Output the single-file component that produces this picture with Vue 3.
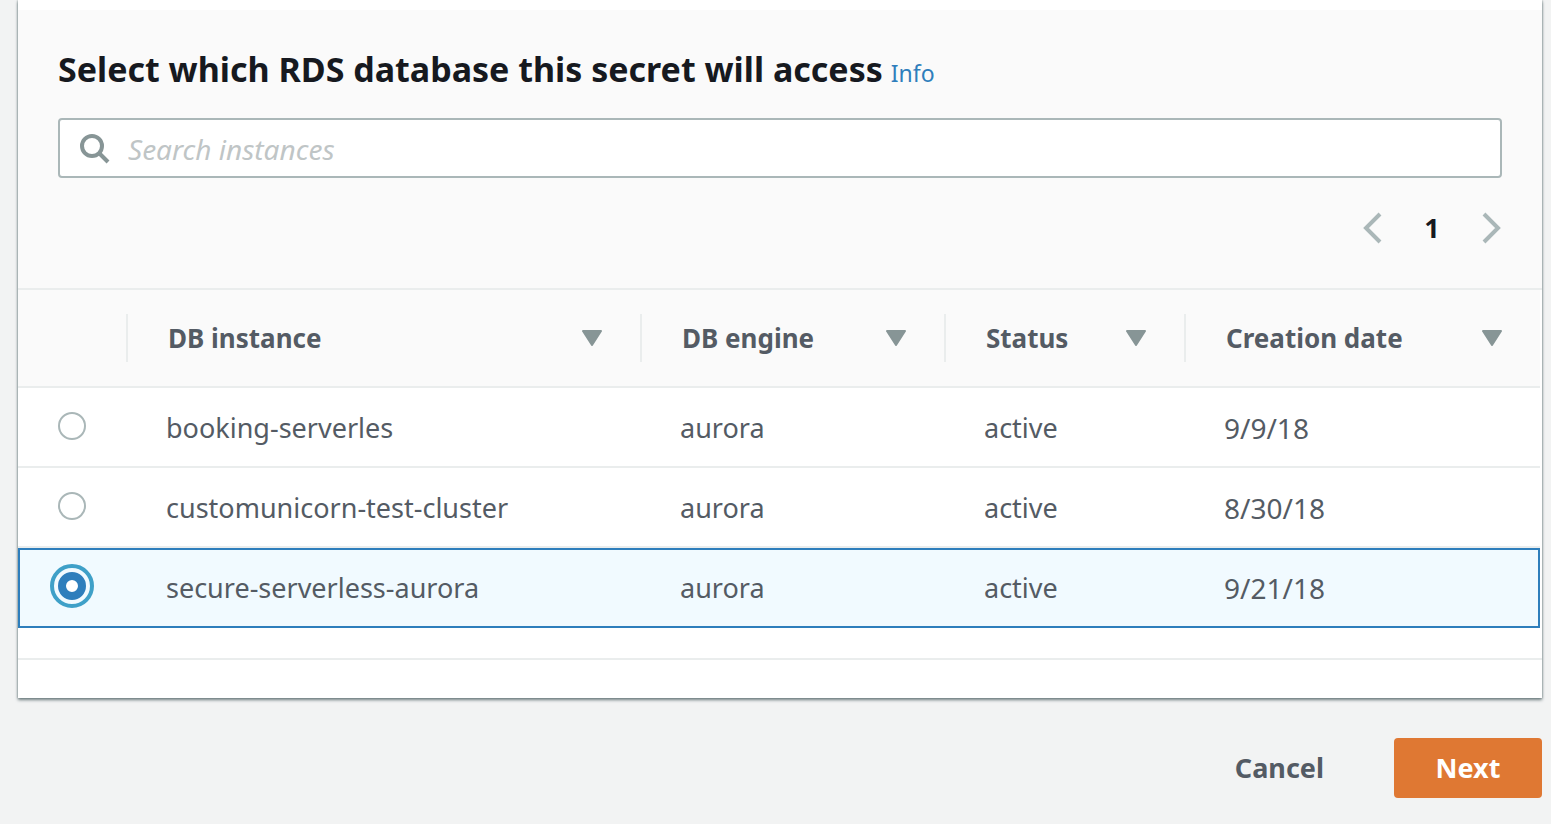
<script setup>
import { ref } from 'vue'

const query = ref('')
const selected = ref('secure-serverless-aurora')

const columns = [
  { key: 'instance', label: 'DB instance' },
  { key: 'engine', label: 'DB engine' },
  { key: 'status', label: 'Status' },
  { key: 'created', label: 'Creation date' },
]

const instances = [
  { id: 'booking-serverles', engine: 'aurora', status: 'active', created: '9/9/18' },
  { id: 'customunicorn-test-cluster', engine: 'aurora', status: 'active', created: '8/30/18' },
  { id: 'secure-serverless-aurora', engine: 'aurora', status: 'active', created: '9/21/18' },
]
</script>

<template>
  <main class="page">
    <section class="panel">
      <header class="panel-header">
        <div class="title-row">
          <h2 class="title">Select which RDS database this secret will access</h2>
          <a class="info" href="#info">Info</a>
        </div>
        <div class="search">
          <svg class="search-icon" viewBox="0 0 32 32" aria-hidden="true">
            <circle cx="14" cy="14" r="10" />
            <path d="M21 21l9 9" />
          </svg>
          <input v-model="query" class="search-input" type="text" placeholder="Search instances" aria-label="Search instances" />
        </div>
        <nav class="pagination" aria-label="Pages">
          <button class="page-arrow" type="button" aria-label="Previous page">
            <svg viewBox="0 0 20 32" aria-hidden="true"><path d="M18 2L4 16l14 14" /></svg>
          </button>
          <button class="page-number" type="button" aria-current="page">1</button>
          <button class="page-arrow" type="button" aria-label="Next page">
            <svg viewBox="0 0 20 32" aria-hidden="true"><path d="M2 2l14 14L2 30" /></svg>
          </button>
        </nav>
      </header>

      <div class="table-wrap">
        <table class="table">
          <colgroup>
            <col class="col-select" />
            <col v-for="c in columns" :key="c.key" :class="'col-' + c.key" />
          </colgroup>
          <thead>
            <tr>
              <td></td>
              <th v-for="c in columns" :key="c.key" scope="col">
                <div class="head-cell">
                  <span>{{ c.label }}</span>
                  <svg class="sort" viewBox="0 0 20 16" aria-hidden="true">
                    <path d="M1 1h18l-9 14z" />
                  </svg>
                </div>
              </th>
            </tr>
          </thead>
          <tbody>
            <tr v-for="row in instances" :key="row.id" :class="{ selected: row.id === selected }">
              <td class="select-cell">
                <input :id="row.id" v-model="selected" class="radio" type="radio" name="instance" :value="row.id" />
              </td>
              <td><label :for="row.id">{{ row.id }}</label></td>
              <td>{{ row.engine }}</td>
              <td>{{ row.status }}</td>
              <td class="date">{{ row.created }}</td>
            </tr>
          </tbody>
        </table>
      </div>
      <footer class="panel-footer"></footer>
    </section>

    <div class="actions">
      <button class="btn" type="button">Cancel</button>
      <button class="btn primary" type="button">Next</button>
    </div>
  </main>
</template>

<style>
body {
  margin: 0;
  background: #f2f3f3;
}
</style>

<style scoped>
.page {
  box-sizing: border-box;
  min-height: 100vh;
  padding: 0 9px 26px 18px;
  background: #f2f3f3;
  color: #545b64;
  font-family: "Noto Sans", "Open Sans", sans-serif;
  font-size: 27px;
  line-height: 40px;
}

.panel {
  padding-top: 10px;
  background: #fff;
  box-shadow: 0 2px 3px 0 #6f7e80, 0 0 2px 0 #879596;
}

.panel-header {
  padding: 36px 40px 40px;
  background: #fafafa;
  border-bottom: 2px solid #eaeded;
}

.title-row {
  display: flex;
  align-items: baseline;
  gap: 8px;
}

.title {
  margin: 0;
  color: #16191f;
  font-size: 34px;
  font-weight: 700;
  line-height: 46px;
}

.info {
  color: #2e7ebc;
  font-size: 23px;
  text-decoration: none;
}

.search {
  display: flex;
  align-items: center;
  gap: 18px;
  box-sizing: border-box;
  height: 60px;
  margin-top: 25px;
  padding: 0 18px;
  background: #fff;
  border: 2px solid #aab7b8;
  border-radius: 4px;
}

.search-icon {
  flex: none;
  width: 32px;
  height: 32px;
  fill: none;
  stroke: #879596;
  stroke-width: 4;
}

.search-input {
  flex: 1;
  min-width: 0;
  padding: 2px 0 0;
  border: 0;
  outline: 0;
  background: transparent;
  color: #16191f;
  font: inherit;
  font-size: 28px;
}

.search-input::placeholder {
  color: #bfc5c6;
  font-style: italic;
  opacity: 1;
}

.pagination {
  display: flex;
  justify-content: flex-end;
  align-items: center;
  margin-top: 30px;
}

.page-arrow {
  display: flex;
  padding: 0;
  border: 0;
  background: none;
}

.page-arrow svg {
  width: 20px;
  height: 32px;
  fill: none;
  stroke: #aab7b8;
  stroke-width: 4;
}

.page-number {
  width: 100px;
  padding: 0;
  border: 0;
  background: none;
  color: #16191f;
  font: inherit;
  font-weight: 700;
}

.table-wrap {
  padding: 0 2px 30px 0;
  border-bottom: 2px solid #eaeded;
}

.table {
  width: 100%;
  border-collapse: separate;
  border-spacing: 0;
  table-layout: fixed;
}

.col-select {
  width: 110px;
}

.col-engine {
  width: 304px;
}

.col-status {
  width: 240px;
}

.col-created {
  width: 354px;
}

thead th,
thead td {
  height: 96px;
  padding: 0;
  background: #fafafa;
  border-bottom: 2px solid #eaeded;
  font-size: 26px;
  text-align: left;
}

.head-cell {
  display: flex;
  justify-content: space-between;
  align-items: center;
  box-sizing: border-box;
  height: 48px;
  margin-left: -2px;
  padding: 0 40px;
  border-left: 2px solid #eaeded;
}

th:last-child .head-cell {
  padding-right: 38px;
}

.sort {
  flex: none;
  width: 20px;
  height: 16px;
  fill: #879596;
  stroke: #879596;
  stroke-width: 2;
  stroke-linejoin: round;
}

tbody td {
  height: 76px;
  padding: 2px 0 0 38px;
  border-bottom: 2px solid #eaeded;
}

tbody .select-cell {
  height: 72px;
  padding: 0 0 2px 40px;
}

tbody .date {
  font-size: 28px;
}

.selected td {
  padding-top: 0;
  background: #f1faff;
  border-top: 2px solid #2e7ebc;
  border-bottom-color: #2e7ebc;
}

.selected .select-cell {
  padding: 0 0 4px 38px;
  border-left: 2px solid #2e7ebc;
}

.selected td:last-child {
  border-right: 2px solid #2e7ebc;
}

.radio {
  display: block;
  box-sizing: border-box;
  width: 28px;
  height: 28px;
  margin: 0;
  appearance: none;
  background: #fff;
  border: 2px solid #aab7b8;
  border-radius: 50%;
}

.radio:checked {
  border: 8px solid #2e7ebc;
  outline: 4px solid #3fa0c8;
  outline-offset: 4px;
}

.panel-footer {
  height: 38px;
}

.actions {
  display: flex;
  justify-content: flex-end;
  gap: 28px;
  margin-top: 40px;
}

.btn {
  height: 60px;
  padding: 0 42px;
  border: 0;
  border-radius: 4px;
  background: none;
  color: #545b64;
  font: inherit;
  font-weight: 700;
}

.primary {
  width: 148px;
  padding: 0;
  background: #df7833;
  color: #fff;
}
</style>
